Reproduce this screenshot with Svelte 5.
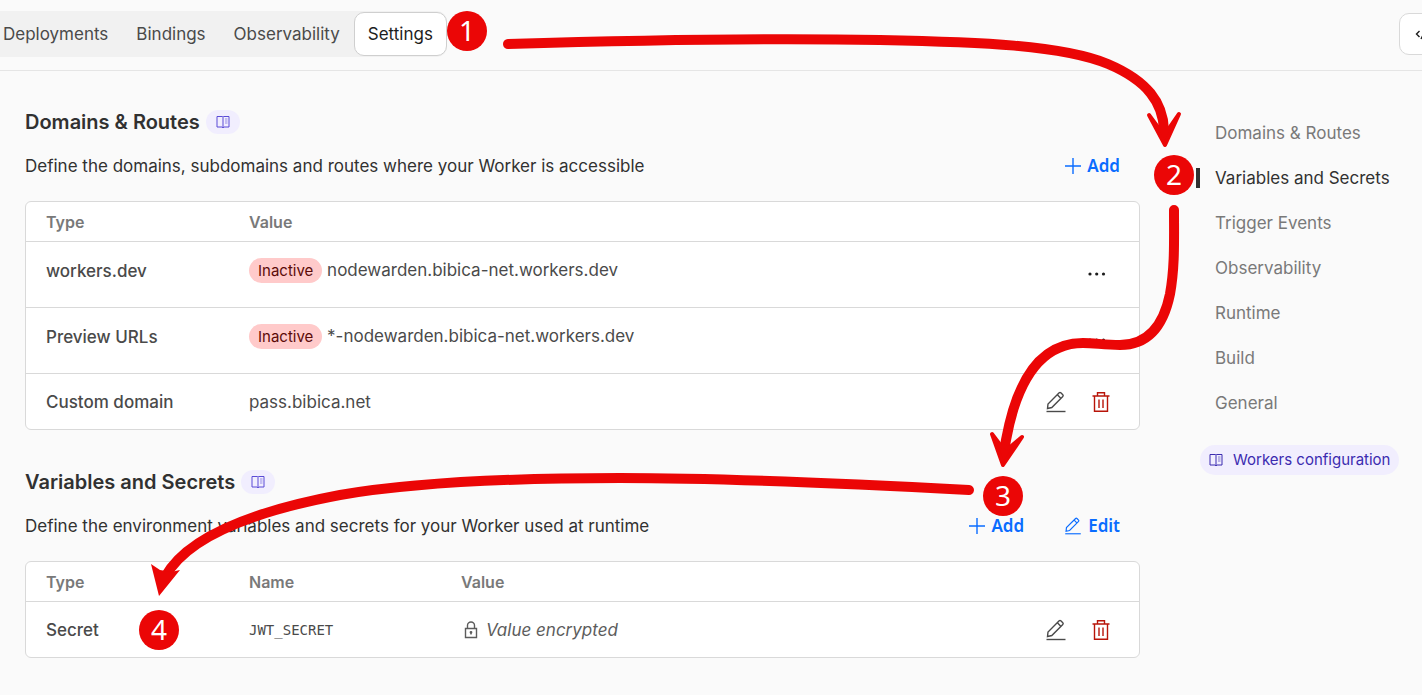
<script lang="ts">
	type Domain = {
		type: string;
		value: string;
		inactive?: boolean;
	};

	const tabs = ['Deployments', 'Bindings', 'Observability', 'Settings'];
	const sections = [
		'Domains & Routes',
		'Variables and Secrets',
		'Trigger Events',
		'Observability',
		'Runtime',
		'Build',
		'General'
	];

	const domains: Domain[] = [
		{ type: 'workers.dev', value: 'nodewarden.bibica-net.workers.dev', inactive: true },
		{ type: 'Preview URLs', value: '*-nodewarden.bibica-net.workers.dev', inactive: true },
		{ type: 'Custom domain', value: 'pass.bibica.net' }
	];

	const steps = [
		{ label: '1', x: 467, y: 31 },
		{ label: '2', x: 1174, y: 175 },
		{ label: '3', x: 1003, y: 496 },
		{ label: '4', x: 159, y: 630 }
	];

	let activeTab = $state('Settings');
	let activeSection = $state('Variables and Secrets');
</script>

{#snippet book()}
	<svg class="icon-book" viewBox="0 0 14 14" width="14" height="14" aria-hidden="true">
		<path d="M1 1.5h5.5l.5.5.5-.5H13v10.500H8l-1 .8-1-.8H1zM7 2v11" />
		<path d="M9 4h2.500M9 6h2.500M9 8h2.500" />
	</svg>
{/snippet}

{#snippet pencil(size: number)}
	<svg class="icon-pencil" viewBox="0 0 20 22" width={size} height={size} aria-hidden="true">
		<path d="M1.5 17.5 2 13 13.2 1.8q.8-.8 1.6 0l2 2q.8.8 0 1.6L5.8 16.5zM11.4 3.8l3.6 3.6" />
		<path d="M.5 20.5h19" />
	</svg>
{/snippet}

{#snippet trash()}
	<svg class="icon-trash" viewBox="0 0 18 22" width="18" height="22" aria-hidden="true">
		<path d="M.5 5h17M5.500 5V1.700h7V5M2.500 5v15.300h13V5M7 8.500v8.500M11 8.500v8.500" />
	</svg>
{/snippet}

{#snippet plus()}
	<svg class="icon-plus" viewBox="0 0 16 16" width="16" height="16" aria-hidden="true">
		<path d="M8 0v16M0 8h16" />
	</svg>
{/snippet}

<div class="page">
	<header class="topbar">
		<nav class="tabs" aria-label="Worker">
			{#each tabs as tab}
				<button
					type="button"
					class="tab"
					class:active={tab === activeTab}
					onclick={() => (activeTab = tab)}>{tab}</button
				>
			{/each}
		</nav>
		<button type="button" class="code-btn" aria-label="Edit code">
			<svg viewBox="0 0 20 14" width="20" height="14" aria-hidden="true">
				<path d="M4.500 4 1.500 7l3 3M6 12l5-10M14.500 4l3 3-3 3" />
			</svg>
		</button>
	</header>

	<div class="layout">
		<main>
			<section>
				<div class="title-row">
					<h2>Domains & Routes</h2>
					<a class="docs" href="#domains" aria-label="Domains documentation">{@render book()}</a>
				</div>
				<div class="desc-row">
					<p>Define the domains, subdomains and routes where your Worker is accessible</p>
					<div class="actions">
						<button type="button" class="action">{@render plus()}Add</button>
					</div>
				</div>
				<div class="card">
					<table>
						<colgroup>
							<col class="col-type" />
							<col />
							<col class="col-buttons" />
						</colgroup>
						<thead>
							<tr>
								<th>Type</th>
								<th>Value</th>
								<th></th>
							</tr>
						</thead>
						<tbody>
							{#each domains as domain}
								<tr class:tall={domain.inactive}>
									<td class="type">{domain.type}</td>
									<td>
										{#if domain.inactive}<span class="badge">Inactive</span>{/if}
										{domain.value}
									</td>
									<td class="buttons">
										{#if domain.inactive}
											<button type="button" class="more" aria-label="More options">
												<svg viewBox="0 0 18 4" width="18" height="4" aria-hidden="true">
													<circle cx="2" cy="2" r="1.6" />
													<circle cx="8.7" cy="2" r="1.6" />
													<circle cx="15.5" cy="2" r="1.6" />
												</svg>
											</button>
										{:else}
											<div class="row-buttons">
												<button type="button" aria-label="Edit">{@render pencil(22)}</button>
												<button type="button" aria-label="Delete">{@render trash()}</button>
											</div>
										{/if}
									</td>
								</tr>
							{/each}
						</tbody>
					</table>
				</div>
			</section>

			<section>
				<div class="title-row">
					<h2>Variables and Secrets</h2>
					<a class="docs" href="#variables" aria-label="Variables documentation">{@render book()}</a>
				</div>
				<div class="desc-row">
					<p>Define the environment variables and secrets for your Worker used at runtime</p>
					<div class="actions">
						<button type="button" class="action">{@render plus()}Add</button>
						<button type="button" class="action">{@render pencil(18)}Edit</button>
					</div>
				</div>
				<div class="card">
					<table>
						<colgroup>
							<col class="col-type" />
							<col class="col-name" />
							<col />
							<col class="col-buttons" />
						</colgroup>
						<thead>
							<tr>
								<th>Type</th>
								<th>Name</th>
								<th>Value</th>
								<th></th>
							</tr>
						</thead>
						<tbody>
							<tr>
								<td class="type">Secret</td>
								<td><code>JWT_SECRET</code></td>
								<td>
									<span class="encrypted">
										<svg viewBox="0 0 14 18" width="14" height="18" aria-hidden="true">
											<path d="M1.500 7.500h11v9h-11zM3.500 7.500V4.500a3.500 3.500 0 0 1 7 0v3M7 11v2.500" />
											<circle cx="7" cy="11.3" r=".7" />
										</svg>
										Value encrypted
									</span>
								</td>
								<td class="buttons">
									<div class="row-buttons">
										<button type="button" aria-label="Edit">{@render pencil(22)}</button>
										<button type="button" aria-label="Delete">{@render trash()}</button>
									</div>
								</td>
							</tr>
						</tbody>
					</table>
				</div>
			</section>
		</main>

		<aside>
			<nav class="toc" aria-label="Sections">
				{#each sections as section}
					<a
						href="#{section}"
						class:current={section === activeSection}
						onclick={() => (activeSection = section)}>{section}</a
					>
				{/each}
			</nav>
			<a class="config" href="#config">{@render book()}Workers configuration</a>
		</aside>
	</div>

	<!-- Walkthrough arrows and step numbers -->
	<svg class="guide" viewBox="0 0 1422 695" width="1422" height="695">
		<g class="line">
			<path d="M508 44C640 40 780 38 880 40C980 42 1062 45 1108 64C1148 81 1163 103 1164 130" />
			<path
				d="M1174 210C1174 240 1175 266 1170 294C1163 328 1146 345 1120 345C1104 345 1095 343 1083 343C1038 343 1016 385 1006 440L1004 452"
			/>
			<path d="M969 490C800 481 700 478 620 478C500 478 410 483 340 495C260 510 188 535 165 577" />
		</g>
		<g class="head">
			<path d="M1149 115L1165 145L1179 114L1168 130L1160 130Z" />
			<path d="M992 434L1003 465L1022 437L1009 448L1001 446Z" />
		</g>
		<path class="sharp" d="M151 564L159 596L180 570L171 572L160 570Z" />
		{#each steps as step}
			<circle cx={step.x} cy={step.y} r="20" />
			<text x={step.x} y={step.y + 10}>{step.label}</text>
		{/each}
	</svg>
</div>

<style>
	:global(body) {
		background: #fafafa;
	}

	.page {
		position: relative;
		overflow: hidden;
		min-height: 100vh;
		font-family: Inter, sans-serif;
		font-size: 17px;
		line-height: 24px;
		color: #313131;
	}

	button {
		font: inherit;
		color: inherit;
		background: none;
		border: none;
		padding: 0;
		cursor: pointer;
	}

	a {
		text-decoration: none;
	}

	svg {
		display: block;
		flex: none;
		fill: none;
		stroke: currentColor;
	}

	.topbar {
		display: flex;
		align-items: center;
		justify-content: space-between;
		box-sizing: border-box;
		height: 71px;
		padding-bottom: 3px;
		border-bottom: 1px solid #e5e5e5;
	}

	.tabs {
		display: flex;
		margin-left: -11px;
		padding: 1px 0;
		background: #f1f1f1;
		border-radius: 10px;
	}

	.tab {
		padding: 9px 13px;
		border: 1px solid transparent;
		border-radius: 10px;
		color: #4a4a4a;
	}

	.tab.active {
		background: #fff;
		border-color: #cfcfcf;
		color: #1d1d1d;
	}

	.code-btn {
		display: flex;
		align-items: center;
		padding: 13px 15px;
		margin-right: -29px;
		border: 1px solid #d9d9d9;
		border-radius: 10px;
		background: #fff;
		color: #1d1d1d;
	}

	.code-btn svg {
		stroke-width: 1.4;
	}

	.layout {
		display: grid;
		grid-template-columns: minmax(0, 1fr) 226px;
		gap: 56px;
		padding: 39px 0 36px 25px;
	}

	main {
		display: flex;
		flex-direction: column;
		gap: 40px;
	}

	.title-row {
		display: flex;
		align-items: center;
		gap: 6px;
	}

	h2 {
		margin: 0;
		font-size: 20px;
		font-weight: 600;
		line-height: 24px;
	}

	.docs {
		padding: 5px 10px;
		border-radius: 12px;
		background: #f1eefe;
		color: #5a4bd6;
	}

	.icon-book path + path {
		opacity: 0.6;
	}

	.desc-row {
		display: flex;
		align-items: center;
		justify-content: space-between;
		margin: 20px 0 23px;
	}

	p {
		margin: 0;
	}

	.actions {
		display: flex;
		gap: 40px;
		margin-right: 20px;
	}

	.action {
		display: flex;
		align-items: center;
		gap: 6px;
		font-family: 'Noto Sans', sans-serif;
		font-size: 17px;
		font-weight: 600;
		color: #0a6cff;
	}

	.icon-plus {
		stroke-width: 1.4;
	}

	.icon-pencil {
		stroke-width: 1.4;
	}

	.card {
		background: #fff;
		border: 1px solid #d9d9d9;
		border-radius: 6px;
	}

	table {
		width: 100%;
		table-layout: fixed;
		border-collapse: separate;
		border-spacing: 0;
	}

	.col-type {
		width: 203px;
	}

	.col-name {
		width: 212px;
	}

	.col-buttons {
		width: 130px;
	}

	th,
	td {
		padding: 0 0 0 20px;
		text-align: left;
	}

	th {
		height: 39px;
		font-size: 16px;
		font-weight: 600;
		color: #797979;
	}

	td {
		height: 55px;
		border-top: 1px solid #d9d9d9;
		color: #4a4a4a;
	}

	.tall td {
		height: 57px;
		padding-bottom: 8px;
	}

	.tall td.buttons {
		height: 63px;
		padding-bottom: 2px;
	}

	.type {
		font-weight: 500;
	}

	.badge {
		display: inline-block;
		padding: 0 9px;
		border-radius: 13px;
		background: #ffcaca;
		color: #5c0a08;
		font-size: 15px;
		line-height: 25px;
	}

	td.buttons {
		padding-right: 29px;
	}

	.more {
		display: block;
		margin-left: auto;
		padding: 8px 4px;
		color: #1d1d1d;
	}

	.more svg {
		fill: currentColor;
		stroke: none;
	}

	.row-buttons {
		display: flex;
		justify-content: flex-end;
		gap: 25px;
	}

	.icon-trash {
		color: #b81409;
		stroke-width: 1.4;
	}

	code {
		font-family: 'DejaVu Sans Mono', monospace;
		font-size: 14px;
	}

	.encrypted {
		display: flex;
		align-items: center;
		gap: 8px;
		padding-left: 3px;
		font-style: italic;
		color: #5c5c5c;
	}

	.encrypted svg {
		stroke-width: 1.4;
	}

	aside {
		display: flex;
		flex-direction: column;
		align-items: flex-start;
	}

	.toc {
		display: flex;
		flex-direction: column;
		gap: 25px;
		padding-top: 13px;
	}

	.toc a {
		padding-left: 15px;
		border-left: 4px solid transparent;
		line-height: 20px;
		color: #797979;
	}

	.toc a.current {
		border-image: linear-gradient(#313131, #313131) 1;
		color: #313131;
	}

	.config {
		display: flex;
		align-items: center;
		gap: 10px;
		margin: 32px 0 0 4px;
		padding: 3px 9px;
		border-radius: 15px;
		background: #f1eefe;
		color: #3b2bb0;
		font-size: 15px;
	}

	.guide {
		position: absolute;
		top: 0;
		left: 0;
		pointer-events: none;
		stroke: none;
		fill: #eb0606;
	}

	.line {
		fill: none;
		stroke: #eb0606;
		stroke-width: 10;
		stroke-linecap: round;
	}

	.head {
		stroke: #eb0606;
		stroke-width: 4;
		stroke-linejoin: round;
	}

	.guide text {
		fill: #fff;
		font-family: 'Noto Sans', sans-serif;
		font-size: 28px;
		text-anchor: middle;
	}
</style>
